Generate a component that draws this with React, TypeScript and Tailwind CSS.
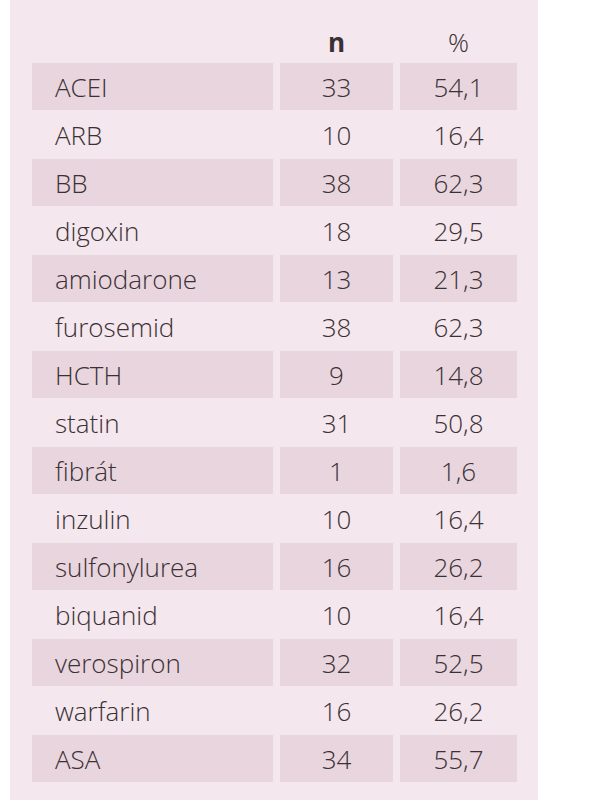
import React from 'react';

interface DrugRow {
  name: string;
  n: string;
  pct: string;
}

const rows: DrugRow[] = [
  { name: 'ACEI', n: '33', pct: '54,1' },
  { name: 'ARB', n: '10', pct: '16,4' },
  { name: 'BB', n: '38', pct: '62,3' },
  { name: 'digoxin', n: '18', pct: '29,5' },
  { name: 'amiodarone', n: '13', pct: '21,3' },
  { name: 'furosemid', n: '38', pct: '62,3' },
  { name: 'HCTH', n: '9', pct: '14,8' },
  { name: 'statin', n: '31', pct: '50,8' },
  { name: 'fibrát', n: '1', pct: '1,6' },
  { name: 'inzulin', n: '10', pct: '16,4' },
  { name: 'sulfonylurea', n: '16', pct: '26,2' },
  { name: 'biquanid', n: '10', pct: '16,4' },
  { name: 'verospiron', n: '32', pct: '52,5' },
  { name: 'warfarin', n: '16', pct: '26,2' },
  { name: 'ASA', n: '34', pct: '55,7' },
];

const App: React.FC = () => {
  return (
    <div className="w-[608px] h-[800px] bg-white" style={{ fontFamily: '"Open Sans", "Noto Sans", sans-serif' }}>
      <div className="ml-[10px] w-[528px] h-full bg-[#f4e7ed] pl-[22px] pr-[21px] text-[#3a3035]">
        {/* Header */}
        <div className="grid grid-cols-[241px_113px_117px] gap-x-[7px] h-[63px] items-center pt-[20px] text-[26px] leading-none">
          <div />
          <div className="text-center font-bold">n</div>
          <div className="text-center font-light">%</div>
        </div>

        {/* Rows */}
        {rows.map((row, i) => {
          const shaded = i % 2 === 0;
          const cell = shaded ? 'bg-[#e9d5dd]' : '';
          return (
            <div key={row.name} className="grid grid-cols-[241px_113px_117px] gap-x-[7px] h-[48px] text-[26px] font-light">
              <div className={`${cell} flex items-center pl-[23px] h-[47px] pt-[2px]`}>{row.name}</div>
              <div className={`${cell} flex items-center justify-center h-[47px] pt-[2px]`}>{row.n}</div>
              <div className={`${cell} flex items-center justify-center h-[47px] pt-[2px]`}>{row.pct}</div>
            </div>
          );
        })}
      </div>
    </div>
  );
};

export default App;
